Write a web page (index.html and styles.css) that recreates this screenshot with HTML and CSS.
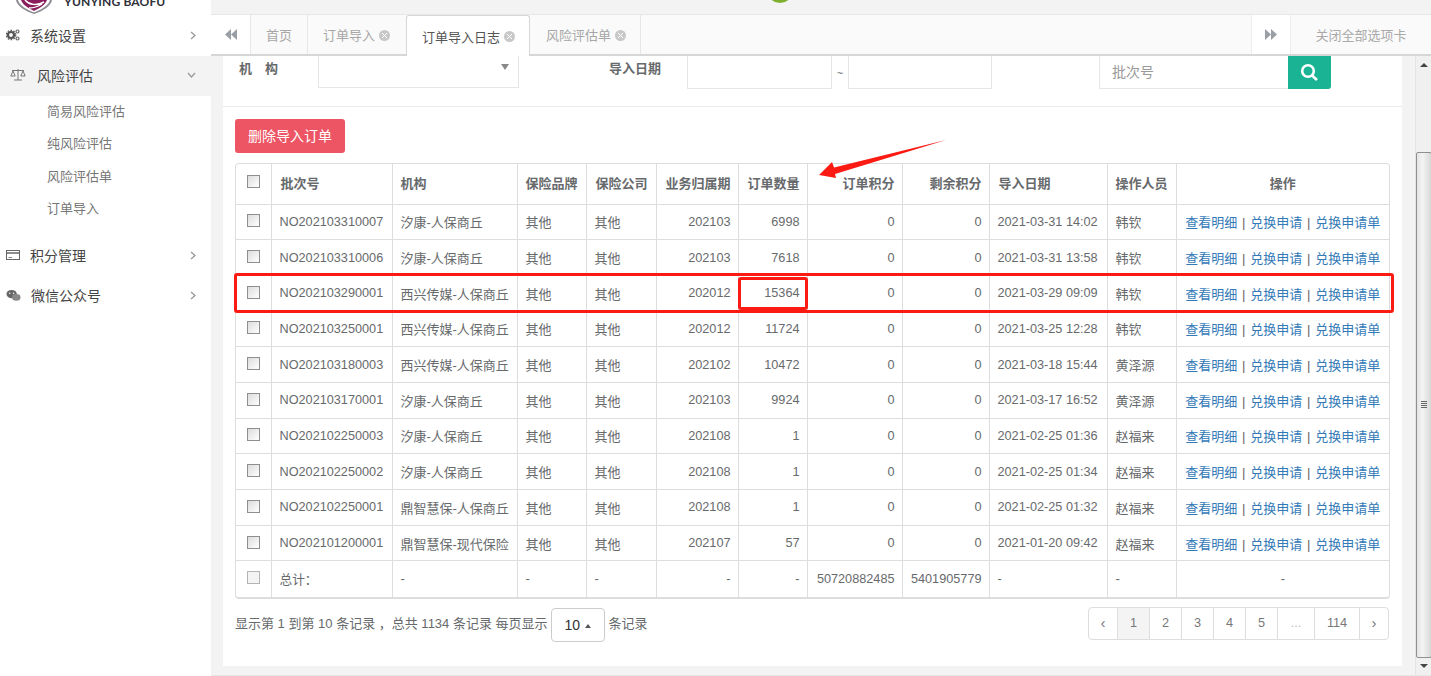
FILE: index.html
```html
<!DOCTYPE html>
<html lang="zh-CN">
<head>
<meta charset="utf-8">
<title>订单导入日志</title>
<link rel="stylesheet" href="styles.css">
</head>
<body>
<div class="app">
  <aside class="sidebar">
    <div class="logo">
      <svg class="shield" width="36" height="14" viewBox="0 0 36 14"><path d="M0 0H36C35 6 27 11 18 14C9 11 1 6 0 0Z" fill="#8a8a90"/><path d="M2 0H34C33 5 26 9.500 18 12.500C10 9.500 3 5 2 0Z" fill="#fff"/><path d="M5 0H31C29 5 24 8 18 11C12 8 7 5 5 0Z" fill="#8a1c5c"/><path d="M9 0C13 5 21 6 28 2M13 8C18 8 23 6 26 4" stroke="#fff" stroke-width="1.500" fill="none"/></svg>
      <span class="logo-text">YUNYING BAOFU</span>
    </div>
    <nav class="nav">
      <div class="nav-item first">
        <svg class="nav-icon" width="14" height="14" viewBox="0 0 14 14"><circle cx="5" cy="7" r="3" fill="none" stroke="#555" stroke-width="2.200"/><circle cx="5" cy="7" r="4.700" fill="none" stroke="#555" stroke-width="1.200" stroke-dasharray="1.600 1.400"/><circle cx="11.500" cy="3.500" r="1.500" fill="none" stroke="#666" stroke-width="1.200"/><circle cx="11.500" cy="10.500" r="1.500" fill="none" stroke="#666" stroke-width="1.200"/></svg>
        <span class="nav-label">系统设置</span>
        <svg class="nav-arrow" width="6" height="9" viewBox="0 0 6 9"><path d="M1 1L5 4.500L1 8" fill="none" stroke="#999" stroke-width="1.300"/></svg>
      </div>
      <div class="nav-item open">
        <svg class="nav-icon scale" width="16" height="14" viewBox="0 0 16 14"><path d="M8 1V12M4 12H12M2 2.500H14M3 3L0.800 8H5.200ZM13 3L10.800 8H15.200Z" fill="none" stroke="#777" stroke-width="1"/></svg>
        <span class="nav-label">风险评估</span>
        <svg class="nav-arrow" width="9" height="6" viewBox="0 0 9 6"><path d="M1 1L4.500 5L8 1" fill="none" stroke="#999" stroke-width="1.300"/></svg>
      </div>
      <ul class="subnav">
        <li>简易风险评估</li>
        <li>纯风险评估</li>
        <li>风险评估单</li>
        <li>订单导入</li>
      </ul>
      <div class="nav-item">
        <svg class="nav-icon" width="14" height="12" viewBox="0 0 14 12"><rect x="0.500" y="1.500" width="13" height="9" fill="none" stroke="#666"/><path d="M1 4H13" stroke="#666" stroke-width="1.500"/><path d="M2.500 8.500H6" stroke="#888"/></svg>
        <span class="nav-label">积分管理</span>
        <svg class="nav-arrow" width="6" height="9" viewBox="0 0 6 9"><path d="M1 1L5 4.500L1 8" fill="none" stroke="#999" stroke-width="1.300"/></svg>
      </div>
      <div class="nav-item wechat">
        <svg class="nav-icon" width="16" height="13" viewBox="0 0 16 13"><ellipse cx="6" cy="5" rx="5.500" ry="4.500" fill="#666"/><ellipse cx="11" cy="8.500" rx="4.500" ry="3.500" fill="#888"/><circle cx="4" cy="4" r="0.800" fill="#fff"/><circle cx="8" cy="4" r="0.800" fill="#fff"/></svg>
        <span class="nav-label">微信公众号</span>
        <svg class="nav-arrow" width="6" height="9" viewBox="0 0 6 9"><path d="M1 1L5 4.500L1 8" fill="none" stroke="#999" stroke-width="1.300"/></svg>
      </div>
    </nav>
  </aside>

  <div class="main">
    <header class="topbar"><span class="avatar"></span></header>
    <div class="tabs">
      <button class="tab-scroll left"><svg width="12" height="11" viewBox="0 0 12 11"><path d="M6 0V11L0 5.500ZM12 0V11L6 5.500Z" fill="#9a9fa6"/></svg></button>
      <div class="tab">首页</div>
      <div class="tab pad-close">订单导入<i class="tab-close"></i></div>
      <div class="tab active">订单导入日志<i class="tab-close"></i></div>
      <div class="tab after-active">风险评估单<i class="tab-close"></i></div>
      <div class="tab-space"></div>
      <button class="tab-scroll right"><svg width="12" height="11" viewBox="0 0 12 11"><path d="M0 0V11L6 5.500ZM6 0V11L12 5.500Z" fill="#9a9fa6"/></svg></button>
      <div class="tab-closeall">关闭全部选项卡</div>
    </div>
    <div class="content">
      <div class="scroll-area">
        <section class="panel">
          <form class="filters">
            <label class="f-label org">机<span class="gap"></span>构</label>
            <div class="select"><i class="caret"></i></div>
            <label class="f-label date">导入日期</label>
            <div class="date-input d1"></div>
            <span class="tilde">~</span>
            <div class="date-input d2"></div>
            <div class="search">
              <div class="search-input">批次号</div>
              <button class="search-btn" type="button"><svg width="19" height="19" viewBox="0 0 19 19"><circle cx="8" cy="8" r="5.800" fill="none" stroke="#fff" stroke-width="2.600"/><path d="M12 12.500L17 17" stroke="#fff" stroke-width="2.800"/></svg></button>
            </div>
          </form>
          <div class="list">
            <button class="btn-del" type="button">删除导入订单</button>
            <div class="table-wrap">
              <table class="grid">
                <colgroup>
                  <col class="c1"><col class="c2"><col class="c3"><col class="c4"><col class="c5"><col class="c6"><col class="c7"><col class="c8"><col class="c9"><col class="c10"><col class="c11"><col class="c12">
                </colgroup>
                <thead>
                  <tr>
                    <th class="ctr"><i class="check"></i></th><th>批次号</th><th>机构</th><th>保险品牌</th><th>保险公司</th><th class="r">业务归属期</th><th class="r">订单数量</th><th class="r">订单积分</th><th class="r">剩余积分</th><th>导入日期</th><th>操作人员</th><th class="ctr">操作</th>
                  </tr>
                </thead>
                <tbody>
                  <tr><td class="ctr"><i class="check"></i></td><td>NO202103310007</td><td>汐康-人保商丘</td><td>其他</td><td>其他</td><td class="r">202103</td><td class="r">6998</td><td class="r">0</td><td class="r">0</td><td>2021-03-31 14:02</td><td>韩钦</td><td class="ops"><a>查看明细</a> | <a>兑换申请</a> | <a>兑换申请单</a></td></tr>
                  <tr><td class="ctr"><i class="check"></i></td><td>NO202103310006</td><td>汐康-人保商丘</td><td>其他</td><td>其他</td><td class="r">202103</td><td class="r">7618</td><td class="r">0</td><td class="r">0</td><td>2021-03-31 13:58</td><td>韩钦</td><td class="ops"><a>查看明细</a> | <a>兑换申请</a> | <a>兑换申请单</a></td></tr>
                  <tr><td class="ctr"><i class="check"></i></td><td>NO202103290001</td><td>西兴传媒-人保商丘</td><td>其他</td><td>其他</td><td class="r">202012</td><td class="r">15364</td><td class="r">0</td><td class="r">0</td><td>2021-03-29 09:09</td><td>韩钦</td><td class="ops"><a>查看明细</a> | <a>兑换申请</a> | <a>兑换申请单</a></td></tr>
                  <tr><td class="ctr"><i class="check"></i></td><td>NO202103250001</td><td>西兴传媒-人保商丘</td><td>其他</td><td>其他</td><td class="r">202012</td><td class="r">11724</td><td class="r">0</td><td class="r">0</td><td>2021-03-25 12:28</td><td>韩钦</td><td class="ops"><a>查看明细</a> | <a>兑换申请</a> | <a>兑换申请单</a></td></tr>
                  <tr><td class="ctr"><i class="check"></i></td><td>NO202103180003</td><td>西兴传媒-人保商丘</td><td>其他</td><td>其他</td><td class="r">202102</td><td class="r">10472</td><td class="r">0</td><td class="r">0</td><td>2021-03-18 15:44</td><td>黄泽源</td><td class="ops"><a>查看明细</a> | <a>兑换申请</a> | <a>兑换申请单</a></td></tr>
                  <tr><td class="ctr"><i class="check"></i></td><td>NO202103170001</td><td>汐康-人保商丘</td><td>其他</td><td>其他</td><td class="r">202103</td><td class="r">9924</td><td class="r">0</td><td class="r">0</td><td>2021-03-17 16:52</td><td>黄泽源</td><td class="ops"><a>查看明细</a> | <a>兑换申请</a> | <a>兑换申请单</a></td></tr>
                  <tr><td class="ctr"><i class="check"></i></td><td>NO202102250003</td><td>汐康-人保商丘</td><td>其他</td><td>其他</td><td class="r">202108</td><td class="r">1</td><td class="r">0</td><td class="r">0</td><td>2021-02-25 01:36</td><td>赵福来</td><td class="ops"><a>查看明细</a> | <a>兑换申请</a> | <a>兑换申请单</a></td></tr>
                  <tr><td class="ctr"><i class="check"></i></td><td>NO202102250002</td><td>汐康-人保商丘</td><td>其他</td><td>其他</td><td class="r">202108</td><td class="r">1</td><td class="r">0</td><td class="r">0</td><td>2021-02-25 01:34</td><td>赵福来</td><td class="ops"><a>查看明细</a> | <a>兑换申请</a> | <a>兑换申请单</a></td></tr>
                  <tr><td class="ctr"><i class="check"></i></td><td>NO202102250001</td><td>鼎智慧保-人保商丘</td><td>其他</td><td>其他</td><td class="r">202108</td><td class="r">1</td><td class="r">0</td><td class="r">0</td><td>2021-02-25 01:32</td><td>赵福来</td><td class="ops"><a>查看明细</a> | <a>兑换申请</a> | <a>兑换申请单</a></td></tr>
                  <tr><td class="ctr"><i class="check"></i></td><td>NO202101200001</td><td>鼎智慧保-现代保险</td><td>其他</td><td>其他</td><td class="r">202107</td><td class="r">57</td><td class="r">0</td><td class="r">0</td><td>2021-01-20 09:42</td><td>赵福来</td><td class="ops"><a>查看明细</a> | <a>兑换申请</a> | <a>兑换申请单</a></td></tr>
                  <tr class="total"><td class="ctr"><i class="check plain"></i></td><td>总计：</td><td>-</td><td>-</td><td>-</td><td class="r">-</td><td class="r">-</td><td class="r">50720882485</td><td class="r">5401905779</td><td>-</td><td>-</td><td class="ctr">-</td></tr>
                </tbody>
              </table>
            </div>
            <div class="pager-row">
              <div class="pager-info">
                <span class="info-text">显示第 1 到第 10 条记录 ，总共 1134 条记录 每页显示</span>
                <span class="page-size">10<i class="size-caret"></i></span>
                <span class="info-text">条记录</span>
              </div>
              <ul class="pager">
                <li class="nav-p">‹</li><li class="cur">1</li><li>2</li><li>3</li><li>4</li><li>5</li><li class="dots">...</li><li class="last">114</li><li class="nav-p">›</li>
              </ul>
            </div>
          </div>
        </section>
      </div>
      <div class="scrollbar">
        <i class="sb-up"></i>
        <div class="sb-thumb"><i class="grip"></i></div>
        <i class="sb-down"></i>
      </div>
    </div>
  </div>
</div>
<div class="mark mark-row"></div>
<div class="mark mark-cell"></div>
<svg class="mark-arrow" width="134" height="44" viewBox="0 0 134 44"><path d="M132 1L20 28.500L18 23L5 36L22 39L21 35Z" fill="#fb1b13"/></svg>
</body>
</html>
```

FILE: styles.css
```css
* { box-sizing: border-box; }
html, body { margin: 0; padding: 0; height: 100%; overflow: hidden; }
body {
  font-family: "Liberation Sans", "Noto Sans CJK SC", sans-serif;
  font-size: 13px;
  color: #676a6c;
  background: #f3f3f4;
}
i { display: block; font-style: normal; }
ul { list-style: none; margin: 0; padding: 0; }
button { border: 0; padding: 0; font: inherit; }

.app { display: flex; height: 676px; }

/* Sidebar */
.sidebar { width: 211px; flex: none; background: #fff; overflow: hidden; }
.logo { height: 16px; display: flex; padding-left: 16px; position: relative; overflow: hidden; }
.shield { flex: none; }
.logo-text {
  margin: -6px 0 0 12px;
  font: bold 12.100px/16px "Lato", "Liberation Sans", sans-serif;
  letter-spacing: .1px;
  color: #2f3138;
  white-space: nowrap;
}
.nav-item { height: 40px; display: flex; align-items: center; padding: 0 14px 2px 6px; color: #444; }
.nav-item.open { background: #f3f3f4; padding-left: 10px; }
.nav-icon { flex: none; width: 14px; margin-right: 10px; }
.nav-icon.scale { width: 16px; margin-right: 11px; }
.wechat .nav-icon { width: 15px; }
.nav-label { flex: 1; font-size: 14px; white-space: nowrap; }
.nav-arrow { flex: none; margin-right: 1px; }
.subnav { padding: 0 0 11px 47px; }
.subnav li { height: 32.300px; line-height: 32.300px; color: #777; font-size: 13px; }

/* Main */
.main { flex: 1; min-width: 0; display: flex; flex-direction: column; border-bottom: 1px solid #e7e7e7; }
.topbar { height: 15px; background: #f3f3f4; position: relative; overflow: hidden; flex: none; border-bottom: 1px solid #e7e7e7; }
.avatar { position: absolute; left: 557px; top: -18px; width: 24px; height: 21px; border-radius: 50%; background: #7fae2e; }

.tabs { height: 41px; flex: none; display: flex; background: #fafafa; border-bottom: 2px solid #d6d6d6; color: #a7a7a7; position: relative; }
.tab-scroll { background: #fff; height: 39px; display: flex; align-items: center; justify-content: center; flex: none; }
.tab-scroll.left { width: 39px; }
.tab-scroll.right { width: 40px; border-left: 1px solid #eee; border-right: 1px solid #eee; }
.tab { height: 39px; display: flex; align-items: center; padding: 0 15px; border-left: 1px solid #e7e7e7; white-space: nowrap; flex: none; }
.tab.pad-close { padding-right: 16px; }
.tab.active {
  height: 41px; background: #fff; color: #555; border: 1px solid #d6d6d6; border-bottom: 0;
  border-radius: 3px 3px 0 0; padding: 0 14px 0 15px;
}
.tab.after-active { border-left: 0; border-right: 1px solid #e7e7e7; padding: 0 14px 0 16px; }
.tab-close {
  width: 11px; height: 11px; border-radius: 50%; background: #c8c8c8; margin: 1px 0 0 4px; position: relative;
}
.tab-close::before { content: ""; position: absolute; left: 3px; top: 3px; width: 5px; height: 5px;
  background: linear-gradient(45deg, transparent 42%, #fff 42%, #fff 58%, transparent 58%), linear-gradient(-45deg, transparent 42%, #fff 42%, #fff 58%, transparent 58%); }
.tab-space { flex: 1; }
.tab-closeall { width: 140px; height: 39px; display: flex; align-items: center; justify-content: center; color: #a9a9a9; flex: none; }

.content { flex: 1; min-height: 0; display: flex; background: #f3f3f4; }
.scroll-area { flex: 1; min-width: 0; padding: 0 13px 0 12px; overflow: hidden; }
.panel { background: #fff; height: 610px; }

/* Filters */
.filters { height: 51px; border-bottom: 1px solid #e7eaec; display: flex; align-items: flex-start; position: relative; padding-left: 16px; }
.f-label { font-weight: bold; line-height: 26px; color: #676a6c; flex: none; }
.f-label.org { width: 79px; }
.gap { display: inline-block; width: 13px; }
.select { width: 201px; height: 32px; border: 1px solid #e5e6e7; border-top: 0; position: relative; flex: none; }
.caret { position: absolute; right: 9px; top: 8px; border: 4px solid transparent; border-top: 6px solid #888; border-bottom: 0; width: 0; height: 0; }
.f-label.date { margin-left: 90px; width: 78px; }
.date-input { height: 33px; width: 145px; border: 1px solid #e5e6e7; border-top: 0; flex: none; }
.d2 { width: 144px; }
.tilde { width: 16px; text-align: center; flex: none; line-height: 34px; font-size: 11px; }
.search { margin-left: 107px; display: flex; flex: none; }
.search-input { width: 189px; height: 33px; border: 1px solid #e5e6e7; border-top: 0; border-right: 0; color: #999; line-height: 32px; padding-left: 12px; font-size: 14px; }
.search-btn { width: 43px; height: 33px; background: #1ab394; border-radius: 0 0 3px 0; display: flex; align-items: center; justify-content: center; }

/* List */
.list { padding: 12px 12px 0 12px; }
.btn-del { display: block; width: 110px; height: 34px; padding-bottom: 2px; background: #ed5565; color: #fff; border-radius: 3px; font-size: 14px; }
.table-wrap { margin-top: 10px; width: 1155px; border: 1px solid #ddd; border-bottom: 2px solid #ddd; border-radius: 4px; overflow: hidden; }
.grid { border-collapse: collapse; table-layout: fixed; width: 1153px; }
.c1 { width: 35px; } .c2 { width: 121px; } .c3 { width: 125px; } .c4 { width: 69px; } .c5 { width: 70px; } .c6 { width: 82px; } .c7 { width: 69px; } .c8 { width: 95px; } .c9 { width: 87px; } .c10 { width: 118px; } .c11 { width: 69px; } .c12 { width: 213px; }
.grid th, .grid td { border: 1px solid #ddd; padding: 0 8px; white-space: nowrap; overflow: hidden; text-align: left; }
.grid tr > :first-child { border-left: 0; }
.grid tr > :last-child { border-right: 0; }
.grid thead tr:first-child th { border-top: 0; }
.grid tbody tr:last-child td { border-bottom: 0; }
.grid th { height: 40px; font-weight: bold; color: #676a6c; padding-bottom: 2px; }
.grid td { height: 35.700px; font-size: 12.700px; color: #676a6c; }
.grid td:nth-child(3), .grid td:nth-child(4), .grid td:nth-child(5), .grid td:nth-child(11) { font-size: 13px; }
.grid th:nth-child(2), .grid th:nth-child(5), .grid th:nth-child(10) { padding-left: 9px; }
.grid .r { text-align: right; padding-right: 7px; }
.grid .ctr { text-align: center; padding-left: 0; padding-right: 0; }
.grid .ops { text-align: center; padding: 0; color: #666; font-size: 13px; word-spacing: 1.200px; }
.ops a { color: #337ab7; }
.check { width: 13px; height: 13px; margin: -2px auto 0; border: 1px solid #8e8e8e; background: linear-gradient(135deg, #dcdcdc, #fff); }
.check.plain { border-color: #b4b4b4; background: #f4f4f4; }

/* Pager */
.pager-row { display: flex; justify-content: space-between; align-items: flex-start; }
.pager-info { display: flex; align-items: center; margin-top: 9px; height: 34px; font-size: 13px; white-space: nowrap; }
.info-text { padding-bottom: 4px; }
.page-size { width: 54px; height: 34px; border: 1px solid #ccc; border-radius: 4px; margin: 0 4px 0 3px; display: flex; align-items: center; padding-left: 13px; color: #333; font-size: 14px; position: relative; }
.size-caret { position: absolute; left: 33px; top: 15px; border: 3px solid transparent; border-bottom: 4px solid #555; border-top: 0; width: 0; height: 0; }
.pager { display: flex; margin: 8px 1px 0 0; height: 33px; border: 1px solid #ddd; border-radius: 4px; overflow: hidden; }
.pager li { width: 32px; display: flex; align-items: center; justify-content: center; border-left: 1px solid #ddd; color: #777; font-size: 12.700px; padding-bottom: 1px; }
.pager li:first-child { border-left: 0; width: 28px; }
.pager .cur { background: #f4f4f4; }
.pager .dots { width: 37px; color: #bbb; }
.pager .last { width: 45px; }
.pager .nav-p { width: 29px; font-size: 15px; }

/* Scrollbar */
.scrollbar { width: 16px; flex: none; background: #f0f0f0; border-left: 1px solid #e4e4e4; position: relative; display: flex; flex-direction: column; align-items: center; }
.sb-up { margin-top: 7px; border: 4px solid transparent; border-bottom: 4px solid #444; border-top: 0; width: 0; height: 0; }
.sb-thumb { margin-top: 85px; height: 506px; width: 16px; border: 1px solid #8f8f8f; background: linear-gradient(90deg, #e4e4e4, #f4f4f4 40%, #d8d8d8); border-radius: 2px; position: relative; }
.grip { position: absolute; left: 4px; top: 248px; width: 6px; height: 7px; background: repeating-linear-gradient(180deg, #666 0 1px, transparent 1px 2px); }
.sb-down { margin-top: 6px; border: 4px solid transparent; border-top: 4px solid #444; border-bottom: 0; width: 0; height: 0; }

/* Annotations drawn over the screenshot */
.mark { position: absolute; border: 3px solid #fb1b13; border-radius: 3px; }
.mark-row { left: 234px; top: 273px; width: 1160px; height: 40px; }
.mark-cell { left: 738px; top: 277px; width: 70px; height: 33px; }
.mark-arrow { position: absolute; left: 814px; top: 139px; }
```
